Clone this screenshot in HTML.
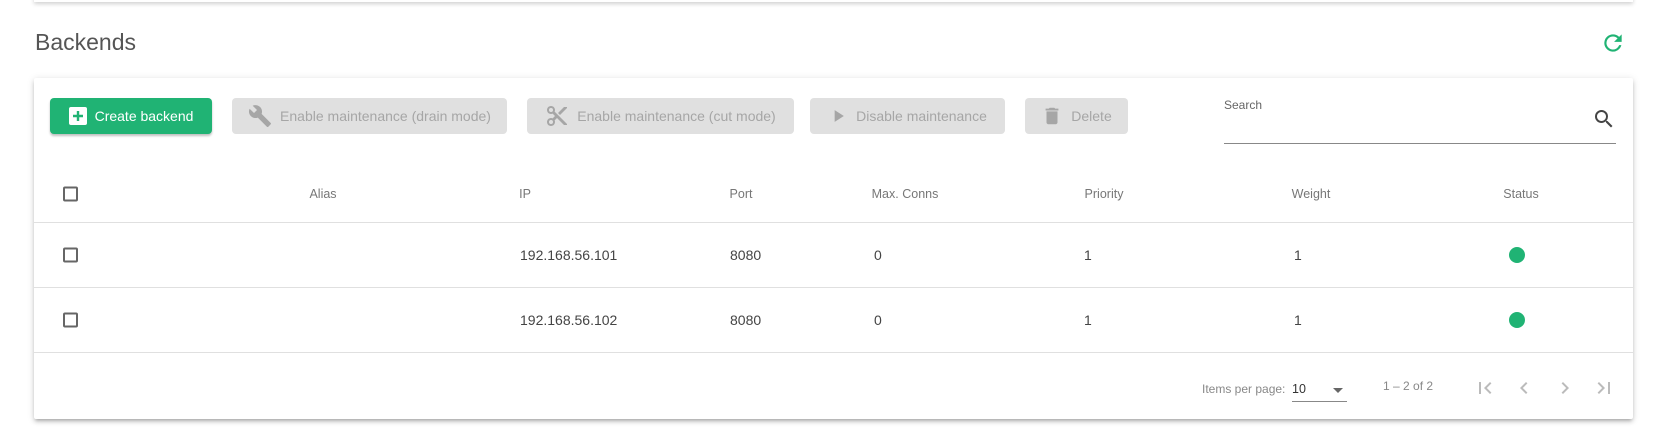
<!DOCTYPE html>
<html><head><meta charset="utf-8"><style>
body{margin:0;width:1655px;height:436px;background:#fff;font-family:"Liberation Sans",sans-serif;position:relative;overflow:hidden;color:#444}
.a{position:absolute}
.topcard{left:34px;right:22px;top:-20px;height:22px;box-shadow:0 2px 4px rgba(0,0,0,.18);background:#fff}
.card{left:34px;width:1599px;top:78px;height:341px;background:#fff;box-shadow:0 3px 3px -2px rgba(0,0,0,.2),0 3px 4px rgba(0,0,0,.14),0 1px 8px rgba(0,0,0,.12);border-radius:2px}
.btn{top:98px;height:36px;border-radius:4px;background:#e0e0e0;color:#a6a6a6;font-size:14px;display:flex;align-items:center;justify-content:center;gap:8px}
.g{background:#20b374;color:#fff;box-shadow:0 2px 2px rgba(0,0,0,.25)}
.h{font-size:12.5px;color:#777;transform:translate(-50%,-50%)}
.c{font-size:14px;transform:translateY(-50%)}
.line{left:34px;width:1599px;height:1px;background:#e0e0e0}
.cb{width:15px;height:15px;border:2px solid #666;border-radius:2px;left:63px;box-sizing:border-box;transform:translateY(-50%)}
.dot{width:16px;height:16px;border-radius:50%;background:#20b374;left:1509px;transform:translateY(-50%)}
</style></head><body>
<div class="a topcard"></div>
<div class="a" style="left:35px;top:29px;font-size:23px;color:#555">Backends</div>
<svg class="a" style="left:1600px;top:30px" width="26" height="26" viewBox="0 0 24 24"><path fill="#20b374" d="M17.65 6.35A7.96 7.96 0 0 0 12 4a8 8 0 1 0 7.73 10h-2.08A6 6 0 1 1 12 6c1.66 0 3.14.69 4.22 1.78L13 11h7V4l-2.35 2.35z"/></svg>
<div class="a card"></div>
<div class="a btn g" style="left:50px;width:162px"><svg width="18" height="18" viewBox="0 0 18 18"><rect width="18" height="18" rx="2" fill="#fff"/><path d="M9 4v10M4 9h10" stroke="#20b374" stroke-width="2.4"/></svg>Create backend</div>
<div class="a btn" style="left:232px;width:275px"><svg width="24" height="24" viewBox="0 0 24 24"><path fill="#a6a6a6" d="M22.7 19l-9.1-9.1c.9-2.3.4-5-1.5-6.9-2-2-5-2.4-7.4-1.3L9 6 6 9 1.6 4.7C.4 7.1.9 10.1 2.9 12.1c1.9 1.9 4.6 2.4 6.9 1.5l9.1 9.1c.4.4 1 .4 1.4 0l2.3-2.3c.5-.4.5-1.1.1-1.4z"/></svg>Enable maintenance (drain mode)</div>
<div class="a btn" style="left:527px;width:267px"><svg width="24" height="24" viewBox="0 0 24 24"><path fill="#a6a6a6" d="M9.64 7.64c.23-.5.36-1.05.36-1.64 0-2.21-1.79-4-4-4S2 3.79 2 6s1.79 4 4 4c.59 0 1.14-.13 1.64-.36L10 12l-2.36 2.36C7.14 14.13 6.59 14 6 14c-2.21 0-4 1.79-4 4s1.79 4 4 4 4-1.79 4-4c0-.59-.13-1.14-.36-1.64L12 14l7 7h3v-1L9.64 7.64zM6 8a2 2 0 1 1 0-4 2 2 0 0 1 0 4zm0 12a2 2 0 1 1 0-4 2 2 0 0 1 0 4zm13-17l-6 6 2 2 7-7V3z"/></svg>Enable maintenance (cut mode)</div>
<div class="a btn" style="left:810px;width:195px"><svg width="20" height="20" viewBox="0 0 24 24"><path fill="#a6a6a6" d="M8 5v14l11-7z"/></svg>Disable maintenance</div>
<div class="a btn" style="left:1025px;width:103px"><svg width="22" height="22" viewBox="0 0 24 24"><path fill="#a6a6a6" d="M6 19c0 1.1.9 2 2 2h8c1.1 0 2-.9 2-2V7H6v12zM19 4h-3.5l-1-1h-5l-1 1H5v2h14V4z"/></svg>Delete</div>
<div class="a" style="left:1224px;top:98px;font-size:12px;color:#666">Search</div>
<svg class="a" style="left:1592px;top:107px" width="24" height="24" viewBox="0 0 24 24"><path fill="#444" d="M15.5 14h-.79l-.28-.27A6.47 6.47 0 0 0 16 9.5 6.5 6.5 0 1 0 9.5 16c1.61 0 3.09-.59 4.23-1.57l.27.28v.79l5 4.99L20.49 19l-4.99-5zm-6 0C7.01 14 5 11.99 5 9.5S7.01 5 9.5 5 14 7.01 14 9.5 11.99 14 9.5 14z"/></svg>
<div class="a" style="left:1224px;width:392px;top:143px;height:1px;background:#888"></div>
<div class="a cb" style="top:194px"></div>
<div class="a h" style="left:323px;top:194px">Alias</div>
<div class="a h" style="left:525px;top:194px">IP</div>
<div class="a h" style="left:741px;top:194px">Port</div>
<div class="a h" style="left:905px;top:194px">Max. Conns</div>
<div class="a h" style="left:1104px;top:194px">Priority</div>
<div class="a h" style="left:1311px;top:194px">Weight</div>
<div class="a h" style="left:1521px;top:194px">Status</div>
<div class="a line" style="top:222px"></div>
<div class="a cb" style="top:255px"></div>
<div class="a c" style="left:520px;top:255px">192.168.56.101</div>
<div class="a c" style="left:730px;top:255px">8080</div>
<div class="a c" style="left:874px;top:255px">0</div>
<div class="a c" style="left:1084px;top:255px">1</div>
<div class="a c" style="left:1294px;top:255px">1</div>
<div class="a dot" style="top:255px"></div>
<div class="a line" style="top:287px"></div>
<div class="a cb" style="top:320px"></div>
<div class="a c" style="left:520px;top:320px">192.168.56.102</div>
<div class="a c" style="left:730px;top:320px">8080</div>
<div class="a c" style="left:874px;top:320px">0</div>
<div class="a c" style="left:1084px;top:320px">1</div>
<div class="a c" style="left:1294px;top:320px">1</div>
<div class="a dot" style="top:320px"></div>
<div class="a line" style="top:352px"></div>
<div class="a" style="left:1202px;top:382px;font-size:12px;color:#888">Items per page:</div>
<div class="a" style="left:1292px;top:382px;font-size:12.5px;color:#333">10</div>
<div class="a" style="left:1333px;top:388px;width:0;height:0;border-left:5px solid transparent;border-right:5px solid transparent;border-top:5px solid #666"></div>
<div class="a" style="left:1292px;width:55px;top:401px;height:1px;background:#888"></div>
<div class="a" style="left:1383px;top:379px;font-size:12px;color:#888">1 – 2 of 2</div>
<svg class="a" style="left:1473px;top:376px" width="24" height="24" viewBox="0 0 24 24"><path fill="#bbb" d="M18.41 16.59L13.82 12l4.59-4.59L17 6l-6 6 6 6zM6 6h2v12H6z"/></svg>
<svg class="a" style="left:1512px;top:376px" width="24" height="24" viewBox="0 0 24 24"><path fill="#bbb" d="M15.41 7.41L14 6l-6 6 6 6 1.41-1.41L10.83 12z"/></svg>
<svg class="a" style="left:1553px;top:376px" width="24" height="24" viewBox="0 0 24 24"><path fill="#bbb" d="M10 6L8.59 7.41 13.17 12l-4.58 4.59L10 18l6-6z"/></svg>
<svg class="a" style="left:1592px;top:376px" width="24" height="24" viewBox="0 0 24 24"><path fill="#bbb" d="M5.59 7.41L10.18 12l-4.59 4.59L7 18l6-6-6-6zM16 6h2v12h-2z"/></svg>
</body></html>
